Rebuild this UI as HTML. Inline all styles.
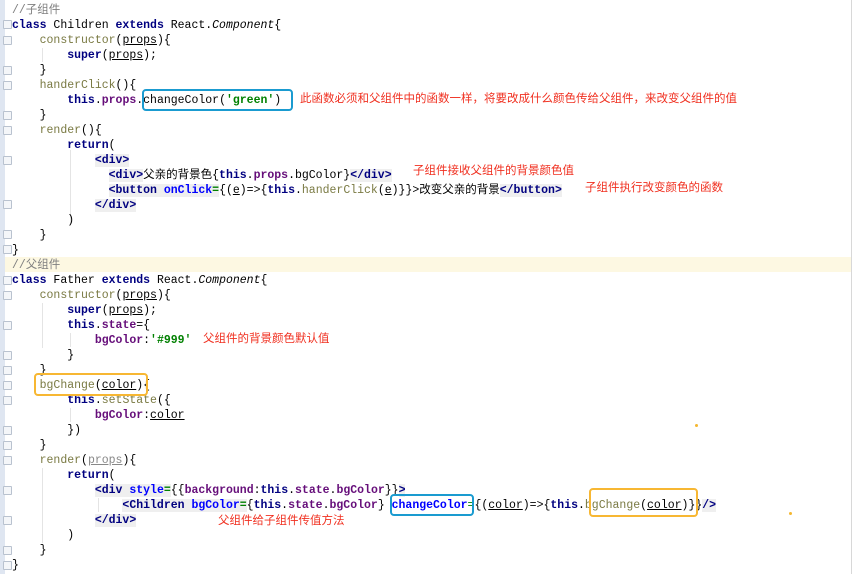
<!DOCTYPE html>
<html><head><meta charset="utf-8">
<style>
html,body{margin:0;padding:0;width:854px;height:574px;background:#fff;overflow:hidden;position:relative}
.gut{position:absolute;left:0;top:0;width:5px;height:574px;background:#dfe6f1}
.vl{position:absolute;right:2px;top:0;width:1px;height:574px;background:#d8d8d8}
.band{position:absolute;left:5px;top:257px;width:846px;height:15px;background:#fdf8e2}
.l{position:absolute;left:12px;height:15px;line-height:15px;white-space:pre;font-family:"Liberation Mono","Noto Sans CJK SC",monospace;font-size:11.5px;color:#000;margin-top:1px}
.k{color:#000080;font-weight:bold}
.m{color:#7a7a43}
.s{color:#008000;font-weight:bold}
.f{color:#660e7a;font-weight:bold}
.a{color:#0000ff;font-weight:bold}
.t{background:#efefef;color:#000080;font-weight:bold}
.c{color:#808080}
.u{text-decoration:underline}
.i{font-style:italic}
.n{position:absolute;font-family:"Liberation Sans","Noto Sans CJK SC",sans-serif;font-size:11.5px;color:#f03020;line-height:15px;white-space:nowrap}
.box{position:absolute;border-radius:4px}
.fold{position:absolute;left:3px;width:7px;height:7px;border:1px solid #b9c2cf;background:#f4f6f9;border-radius:1px}
.ind{position:absolute;width:1px;background:#e4e4e4}
.dot{position:absolute;width:3px;height:3px;background:#f5b730;border-radius:50%}
</style></head><body>
<div class="gut"></div>
<div class="vl"></div>
<div class="band"></div>

<div class="fold" style="top:20px"></div><div class="fold" style="top:36px"></div><div class="fold" style="top:66px"></div>
<div class="fold" style="top:81px"></div><div class="fold" style="top:111px"></div><div class="fold" style="top:126px"></div>
<div class="fold" style="top:156px"></div><div class="fold" style="top:200px"></div><div class="fold" style="top:230px"></div>
<div class="fold" style="top:245px"></div><div class="fold" style="top:276px"></div><div class="fold" style="top:291px"></div>
<div class="fold" style="top:321px"></div><div class="fold" style="top:351px"></div><div class="fold" style="top:366px"></div>
<div class="fold" style="top:381px"></div><div class="fold" style="top:396px"></div><div class="fold" style="top:426px"></div>
<div class="fold" style="top:441px"></div><div class="fold" style="top:456px"></div><div class="fold" style="top:486px"></div>
<div class="fold" style="top:516px"></div><div class="fold" style="top:546px"></div><div class="fold" style="top:561px"></div>

<div class="ind" style="left:42px;top:48px;height:14px"></div>
<div class="ind" style="left:70px;top:150px;height:75px"></div>
<div class="ind" style="left:42px;top:303px;height:45px"></div>
<div class="ind" style="left:70px;top:333px;height:14px"></div>
<div class="ind" style="left:70px;top:408px;height:14px"></div>
<div class="ind" style="left:42px;top:468px;height:75px"></div>
<div class="ind" style="left:98px;top:498px;height:14px"></div>

<div class="l c" style="top:2px">//子组件</div>
<div class="l" style="top:17px"><span class="k">class</span> Children <span class="k">extends</span> React.<span class="i">Component</span>{</div>
<div class="l" style="top:32px">    <span class="m">constructor</span>(<span class="u">props</span>){</div>
<div class="l" style="top:47px">        <span class="k">super</span>(<span class="u">props</span>);</div>
<div class="l" style="top:62px">    }</div>
<div class="l" style="top:77px">    <span class="m">handerClick</span>(){</div>
<div class="l" style="top:92px">        <span class="k">this</span>.<span class="f">props</span>.changeColor(<span class="s">'green'</span>)</div>
<div class="l" style="top:107px">    }</div>
<div class="l" style="top:122px">    <span class="m">render</span>(){</div>
<div class="l" style="top:137px">        <span class="k">return</span>(</div>
<div class="l" style="top:152px">            <span class="t">&lt;div&gt;</span></div>
<div class="l" style="top:167px">              <span class="t">&lt;div&gt;</span>父亲的背景色{<span class="k">this</span>.<span class="f">props</span>.bgColor}<span class="t">&lt;/div&gt;</span></div>
<div class="l" style="top:182px">              <span class="t">&lt;button <span class="a">onClick</span><span style="color:#008000">=</span></span>{(<span class="u">e</span>)=&gt;{<span class="k">this</span>.<span class="m">handerClick</span>(<span class="u">e</span>)}}&gt;改变父亲的背景<span class="t">&lt;/button&gt;</span></div>
<div class="l" style="top:197px">            <span class="t">&lt;/div&gt;</span></div>
<div class="l" style="top:212px">        )</div>
<div class="l" style="top:227px">    }</div>
<div class="l" style="top:242px">}</div>
<div class="l c" style="top:257px">//父组件</div>
<div class="l" style="top:272px"><span class="k">class</span> Father <span class="k">extends</span> React.<span class="i">Component</span>{</div>
<div class="l" style="top:287px">    <span class="m">constructor</span>(<span class="u">props</span>){</div>
<div class="l" style="top:302px">        <span class="k">super</span>(<span class="u">props</span>);</div>
<div class="l" style="top:317px">        <span class="k">this</span>.<span class="f">state</span>={</div>
<div class="l" style="top:332px">            <span class="f">bgColor</span>:<span class="s">'#999'</span></div>
<div class="l" style="top:347px">        }</div>
<div class="l" style="top:362px">    }</div>
<div class="l" style="top:377px">    <span class="m">bgChange</span>(<span class="u">color</span>){</div>
<div class="l" style="top:392px">        <span class="k">this</span>.<span class="m">setState</span>({</div>
<div class="l" style="top:407px">            <span class="f">bgColor</span>:<span class="u">color</span></div>
<div class="l" style="top:422px">        })</div>
<div class="l" style="top:437px">    }</div>
<div class="l" style="top:452px">    <span class="m">render</span>(<span class="u" style="color:#888">props</span>){</div>
<div class="l" style="top:467px">        <span class="k">return</span>(</div>
<div class="l" style="top:482px">            <span class="t">&lt;div <span class="a">style</span><span style="color:#008000">=</span></span>{{<span class="f">background</span>:<span class="k">this</span>.<span class="f">state</span>.<span class="f">bgColor</span>}}<span class="t">&gt;</span></div>
<div class="l" style="top:497px">                <span class="t">&lt;Children <span class="a">bgColor</span><span style="color:#008000">=</span></span>{<span class="k">this</span>.<span class="f">state</span>.<span class="f">bgColor</span>} <span class="a">changeColor</span><span style="color:#008000">=</span>{(<span class="u">color</span>)=&gt;{<span class="k">this</span>.<span class="m">bgChange</span>(<span class="u">color</span>)}}<span class="t">/&gt;</span></div>
<div class="l" style="top:512px">            <span class="t">&lt;/div&gt;</span></div>
<div class="l" style="top:527px">        )</div>
<div class="l" style="top:542px">    }</div>
<div class="l" style="top:557px">}</div>

<div class="n" style="left:300px;top:92px">此函数必须和父组件中的函数一样，将要改成什么颜色传给父组件，来改变父组件的值</div>
<div class="n" style="left:413px;top:164px">子组件接收父组件的背景颜色值</div>
<div class="n" style="left:585px;top:181px">子组件执行改变颜色的函数</div>
<div class="n" style="left:203px;top:332px">父组件的背景颜色默认值</div>
<div class="n" style="left:218px;top:514px">父组件给子组件传值方法</div>

<div class="box" style="left:142px;top:89px;width:147px;height:18px;border:2px solid #1a9bd0"></div>
<div class="box" style="left:34px;top:373px;width:110px;height:19px;border:2px solid #f7b733"></div>
<div class="box" style="left:390px;top:494px;width:80px;height:18px;border:2px solid #1a9bd0"></div>
<div class="box" style="left:589px;top:488px;width:105px;height:25px;border:2px solid #f7b733"></div>
<div class="dot" style="left:695px;top:424px"></div>
<div class="dot" style="left:789px;top:512px"></div>
</body></html>
